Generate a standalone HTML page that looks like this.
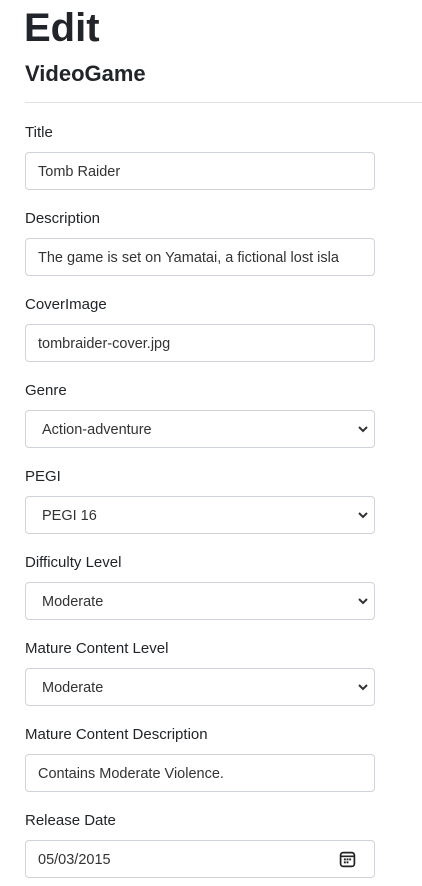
<!DOCTYPE html>
<html><head><style>
body{margin:0;background:#fff;font-family:"Liberation Sans",sans-serif;color:#212529;width:422px;height:886px;overflow:hidden;position:relative}
.a{position:absolute}
h1{position:absolute;left:24px;top:2px;margin:0;font-size:40px;font-weight:bold;line-height:52px}
h2{position:absolute;left:25px;top:59px;margin:0;font-size:22px;font-weight:bold;line-height:30px}
.hr{position:absolute;left:25px;top:102px;width:397px;height:1px;background:#e2e2e2}
.l{position:absolute;left:25px;font-size:15px;line-height:20px;top:0}
.i{position:absolute;left:25px;height:36px;border:1px solid #ced4da;border-radius:4px;font-size:14.5px;line-height:38px;padding-left:12px;box-sizing:content-box;width:336px;overflow:hidden;white-space:nowrap;color:#333}
.s{padding-left:16px;width:332px}
.s svg{position:absolute;right:6px;top:14px}
</style></head><body>
<h1>Edit</h1>
<h2>VideoGame</h2>
<div class="hr"></div>

<div class="l" style="top:123px">Title</div>
<div class="i" style="top:152px">Tomb Raider</div>
<div class="l" style="top:209px">Description</div>
<div class="i" style="top:238px">The game is set on Yamatai, a fictional lost isla</div>
<div class="l" style="top:295px">CoverImage</div>
<div class="i" style="top:324px">tombraider-cover.jpg</div>
<div class="l" style="top:381px">Genre</div>
<div class="i s" style="top:410px">Action-adventure<svg width="10" height="8" viewBox="0 0 10 8"><path d="M1 2l4 4 4-4" fill="none" stroke="#333" stroke-width="2"/></svg></div>
<div class="l" style="top:467px">PEGI</div>
<div class="i s" style="top:496px">PEGI 16<svg width="10" height="8" viewBox="0 0 10 8"><path d="M1 2l4 4 4-4" fill="none" stroke="#333" stroke-width="2"/></svg></div>
<div class="l" style="top:553px">Difficulty Level</div>
<div class="i s" style="top:582px">Moderate<svg width="10" height="8" viewBox="0 0 10 8"><path d="M1 2l4 4 4-4" fill="none" stroke="#333" stroke-width="2"/></svg></div>
<div class="l" style="top:639px">Mature Content Level</div>
<div class="i s" style="top:668px">Moderate<svg width="10" height="8" viewBox="0 0 10 8"><path d="M1 2l4 4 4-4" fill="none" stroke="#333" stroke-width="2"/></svg></div>
<div class="l" style="top:725px">Mature Content Description</div>
<div class="i" style="top:754px">Contains Moderate Violence.</div>
<div class="l" style="top:811px">Release Date</div>
<div class="i" style="top:840px">05/03/2015<svg class="a" style="right:18px;top:10px" width="17" height="17" viewBox="0 0 16 16"><rect x="1.5" y="1.5" width="13" height="13" rx="2.5" fill="none" stroke="#222" stroke-width="1.6"/><line x1="1.5" y1="5" x2="14.5" y2="5" stroke="#222" stroke-width="1.6"/><rect x="4.6" y="7" width="1.8" height="1.8" fill="#222"/><rect x="7.1" y="7" width="1.8" height="1.8" fill="#222"/><rect x="9.6" y="7" width="1.8" height="1.8" fill="#222"/><rect x="4.6" y="9.8" width="1.8" height="1.8" fill="#222"/><rect x="7.1" y="9.8" width="1.8" height="1.8" fill="#222"/></svg></div>
</body></html>
